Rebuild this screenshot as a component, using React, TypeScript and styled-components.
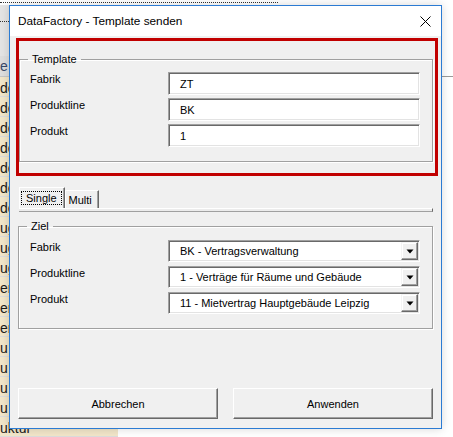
import React from "react";
import styled, { createGlobalStyle } from "styled-components";

const Global = createGlobalStyle`
  html, body { margin: 0; padding: 0; background: #fff; }
  body { font-family: "Liberation Sans", Arial, sans-serif; }
  #root { width: 453px; height: 437px; }
`;

const Page = styled.div`
  position: relative;
  width: 453px;
  height: 437px;
  overflow: hidden;
  background: #fff;
`;

/* ---------- spreadsheet behind the dialog ---------- */
const Sheet = styled.div`
  display: flex;
  flex-direction: column;
  width: 100%;
  height: 100%;
`;

const SheetTop = styled.div`
  height: 62px;
  display: flex;
  flex-direction: column;
`;

const TopStrip = styled.div`
  height: 5px;
  display: flex;
  align-items: flex-start;
`;

const DottedRule = styled.div<{ $w: number; $top: number }>`
  width: ${(p) => p.$w}px;
  margin-top: ${(p) => p.$top}px;
  border-top: 1px dotted #333;
`;

const FormulaArea = styled.div`
  flex: 1;
  width: 60px;
  background: #e4e4e4;
  display: flex;
  flex-direction: column;
`;

const HeaderRow = styled.div`
  height: 21px;
  display: flex;
  box-sizing: border-box;
`;

const HeaderCell = styled.div`
  width: 118px;
  background: #dedede;
  border-bottom: 1px solid #c6c6c6;
  color: #3a4a6a;
  font-size: 14px;
  line-height: 20px;
  white-space: nowrap;
  overflow: hidden;
`;

const HeaderRest = styled.div`
  flex: 1;
  height: 20px;
  border-bottom: 1px solid #9a9a9a;
`;

const Row = styled.div`
  height: 20px;
  display: flex;
  flex-shrink: 0;
`;

const Cell = styled.div`
  width: 118px;
  box-sizing: border-box;
  background: #f2e6c9;
  border-bottom: 1px solid #dcdcdc;
  font-size: 14px;
  line-height: 23px;
  color: #1a1a1a;
  white-space: nowrap;
  overflow: hidden;
`;

/* ---------- dialog window ---------- */
const Window = styled.div`
  position: absolute;
  left: 9px;
  top: 5px;
  width: 433px;
  height: 424px;
  box-sizing: border-box;
  border: 1px solid #2b7bd3;
  background: #f0f0f0;
  display: flex;
  flex-direction: column;
  box-shadow: 0 0 9px rgba(0, 0, 0, 0.16);
  font-size: 11px;
  color: #000;
`;

const TitleBar = styled.div`
  height: 30px;
  flex-shrink: 0;
  background: #fff;
  display: flex;
  align-items: center;
  justify-content: space-between;
  padding: 0 10px 0 8px;
`;

const Title = styled.span`
  font-size: 11.8px;
  color: #000;
`;

const Highlight = styled.div`
  margin: 2px 3px 0 6px;
  border: 3px solid #c10000;
  padding: 11px 2px 11px 0;
`;

const Frame = styled.fieldset<{ $ml?: number; $mr?: number }>`
  margin: 0 ${(p) => p.$mr ?? 0}px 0 ${(p) => p.$ml ?? 0}px;
  padding: 0;
  border: 1px solid #a0a0a0;
  box-shadow: 1px 1px 0 #fff, inset 1px 1px 0 #fff;
  min-width: 0;
`;

const Legend = styled.legend`
  margin-left: 8px;
  padding: 0 4px;
  line-height: 14px;
  font-size: 11px;
`;

const FieldGrid = styled.div<{ $pl: number; $gap: number; $pt: number; $pb: number }>`
  display: grid;
  grid-template-columns: 138px 1fr;
  row-gap: ${(p) => p.$gap}px;
  padding: ${(p) => p.$pt}px 12px ${(p) => p.$pb}px ${(p) => p.$pl}px;
`;

const Label = styled.div`
  line-height: 14px;
  font-size: 11px;
`;

const TextBox = styled.div`
  height: 23px;
  box-sizing: border-box;
  background: #fff;
  border-top: 1px solid #a0a0a0;
  border-left: 1px solid #a0a0a0;
  border-bottom: 1px solid #fff;
  border-right: 1px solid #fff;
  box-shadow: inset 1px 1px 0 #696969, inset -1px -1px 0 #e3e3e3;
  display: flex;
  align-items: center;
  padding-left: 11px;
  font-size: 11px;
`;

const Combo = styled.div`
  height: 22px;
  box-sizing: border-box;
  background: #fff;
  border-top: 1px solid #a0a0a0;
  border-left: 1px solid #a0a0a0;
  border-bottom: 1px solid #fff;
  border-right: 1px solid #fff;
  box-shadow: inset 1px 1px 0 #696969, inset -1px -1px 0 #e3e3e3;
  display: flex;
  align-items: stretch;
  padding: 1px 1px 1px 11px;
  font-size: 11px;
`;

const ComboText = styled.span`
  flex: 1;
  display: flex;
  align-items: center;
  white-space: nowrap;
  overflow: hidden;
`;

const DropButton = styled.div`
  width: 17px;
  box-sizing: border-box;
  background: #f0f0f0;
  border-top: 1px solid #f4f4f4;
  border-left: 1px solid #f4f4f4;
  border-right: 1px solid #696969;
  border-bottom: 1px solid #696969;
  box-shadow: inset -1px -1px 0 #a0a0a0, inset 1px 1px 0 #fff;
  display: flex;
  align-items: center;
  justify-content: center;
`;

const TabStrip = styled.div`
  margin: 11px 8px 0 9px;
  display: flex;
  flex-direction: column;
`;

const TabRow = styled.div`
  height: 21px;
  display: flex;
  align-items: flex-end;
`;

const Tab = styled.div<{ $active?: boolean }>`
  height: ${(p) => (p.$active ? 21 : 18)}px;
  box-sizing: border-box;
  border-top: 1px solid #fff;
  border-left: 1px solid #fff;
  border-right: 1px solid #696969;
  box-shadow: inset -1px 0 0 #a0a0a0;
  display: flex;
  align-items: center;
  padding: ${(p) => (p.$active ? "0 2px 0 1px" : "0 6px 0 3px")};
  font-size: 11px;
`;

const FocusText = styled.span`
  border: 1px dotted #000;
  padding: 0 4px;
  line-height: 12px;
`;

const TabBar = styled.div`
  height: 4px;
  box-sizing: border-box;
  border-top: 1px solid #fff;
  border-bottom: 1px solid #a0a0a0;
  border-right: 1px solid #696969;
  background: #ececec;
`;

const ZielWrap = styled.div`
  margin-top: 7px;
`;

const ButtonRow = styled.div`
  margin-top: auto;
  display: flex;
  justify-content: space-between;
  padding: 0 8px 9px 8px;
`;

const Button = styled.button`
  width: 200px;
  height: 31px;
  box-sizing: border-box;
  background: #f0f0f0;
  border-top: 1px solid #fff;
  border-left: 1px solid #fff;
  border-right: 1px solid #696969;
  border-bottom: 1px solid #696969;
  box-shadow: inset -1px -1px 0 #a0a0a0;
  font-family: "Liberation Sans", Arial, sans-serif;
  font-size: 11px;
  color: #000;
  padding: 0;
`;

const CloseIcon = () => (
  <svg width="11" height="11" viewBox="0 0 11 11" aria-hidden>
    <path d="M0.5 0.5 L10.5 10.5 M10.5 0.5 L0.5 10.5" stroke="#000" strokeWidth="1" fill="none" />
  </svg>
);

const ArrowIcon = () => (
  <svg width="8" height="5" viewBox="0 0 8 5" aria-hidden>
    <polygon points="0.5,0.5 7.5,0.5 4,4.5" fill="#000" />
  </svg>
);

const rows = ["de", "de", "de", "de", "de", "de", "de", "ug", "ug", "ug", "er", "er", "er", "u", "u", "u", "u", "uktur"];

const templateFields = [
  { label: "Fabrik", value: "ZT" },
  { label: "Produktline", value: "BK" },
  { label: "Produkt", value: "1" },
];

const zielFields = [
  { label: "Fabrik", value: "BK - Vertragsverwaltung" },
  { label: "Produktline", value: "1 - Verträge für Räume und Gebäude" },
  { label: "Produkt", value: "11 - Mietvertrag Hauptgebäude Leipzig" },
];

export default function App() {
  return (
    <>
      <Global />
      <Page>
        <Sheet>
          <SheetTop>
            <TopStrip>
              <DottedRule $w={278} $top={2} />
            </TopStrip>
            <FormulaArea>
              <DottedRule $w={9} $top={16} />
            </FormulaArea>
          </SheetTop>
          <HeaderRow>
            <HeaderCell>e</HeaderCell>
            <HeaderRest />
          </HeaderRow>
          {rows.map((t, i) => (
            <Row key={i}>
              <Cell>{t}</Cell>
            </Row>
          ))}
        </Sheet>

        <Window>
          <TitleBar>
            <Title>DataFactory - Template senden</Title>
            <CloseIcon />
          </TitleBar>

          <Highlight>
            <Frame>
              <Legend>Template</Legend>
              <FieldGrid $pl={10} $gap={3} $pt={6} $pb={14}>
                {templateFields.map((f) => (
                  <React.Fragment key={f.label}>
                    <Label>{f.label}</Label>
                    <TextBox>{f.value}</TextBox>
                  </React.Fragment>
                ))}
              </FieldGrid>
            </Frame>
          </Highlight>

          <TabStrip>
            <TabRow>
              <Tab $active>
                <FocusText>Single</FocusText>
              </Tab>
              <Tab>Multi</Tab>
            </TabRow>
            <TabBar />
          </TabStrip>

          <ZielWrap>
            <Frame $ml={8} $mr={8}>
              <Legend>Ziel</Legend>
              <FieldGrid $pl={11} $gap={4} $pt={7} $pb={14}>
                {zielFields.map((f) => (
                  <React.Fragment key={f.label}>
                    <Label>{f.label}</Label>
                    <Combo>
                      <ComboText>{f.value}</ComboText>
                      <DropButton>
                        <ArrowIcon />
                      </DropButton>
                    </Combo>
                  </React.Fragment>
                ))}
              </FieldGrid>
            </Frame>
          </ZielWrap>

          <ButtonRow>
            <Button>Abbrechen</Button>
            <Button>Anwenden</Button>
          </ButtonRow>
        </Window>
      </Page>
    </>
  );
}
